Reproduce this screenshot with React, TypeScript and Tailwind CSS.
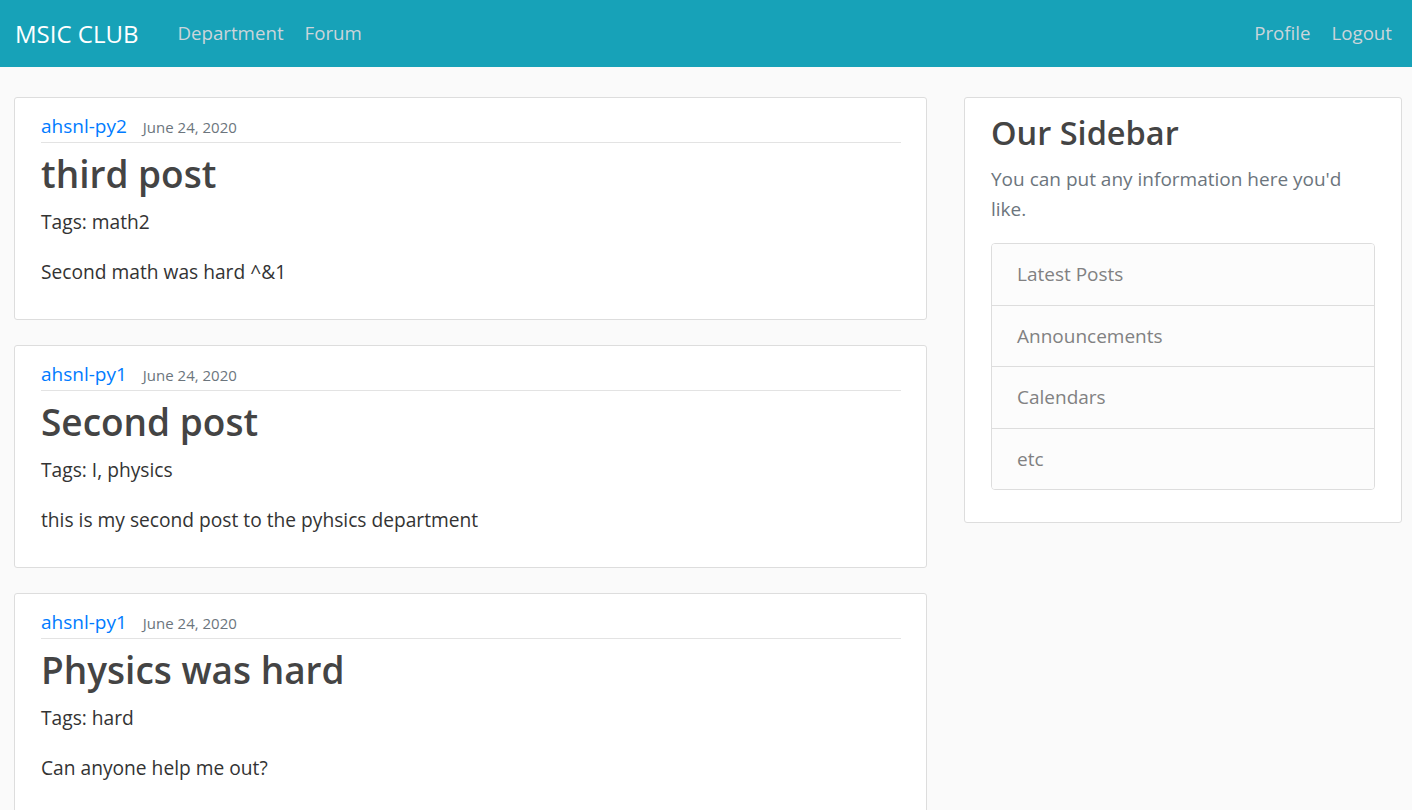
import React from "react";

const posts = [
  { author: "ahsnl-py2", date: "June 24, 2020", title: "third post", tags: "math2", content: "Second math was hard ^&1" },
  { author: "ahsnl-py1", date: "June 24, 2020", title: "Second post", tags: "I, physics", content: "this is my second post to the pyhsics department" },
  { author: "ahsnl-py1", date: "June 24, 2020", title: "Physics was hard", tags: "hard", content: "Can anyone help me out?" },
];

const sideLinks = ["Latest Posts", "Announcements", "Calendars", "etc"];

export default function App() {
  return (
    <div className="min-h-[810px] bg-[#fafafa] text-[#333333] font-['Open_Sans',sans-serif]">
      {/* Navbar */}
      <header className="flex h-[67px] items-center bg-[#17a2b8] pl-[15px] pr-[20px]">
        <a className="text-[24px] text-white">MSIC CLUB</a>
        <nav className="ml-[39px] flex gap-[21px] text-[18.7px] text-[#cbd5db]">
          <a>Department</a>
          <a>Forum</a>
        </nav>
        <nav className="ml-auto flex gap-[21px] text-[18.7px] text-[#cbd5db]">
          <a>Profile</a>
          <a>Logout</a>
        </nav>
      </header>

      <main className="flex gap-[37px] pl-[14px] pr-[10px] pt-[30px]">
        {/* Posts */}
        <div className="flex w-[913px] flex-col gap-[25px]">
          {posts.map((p, i) => (
            <article key={i} className="rounded-[3px] border border-[#dddddd] bg-white pl-[26px] pr-[25px] pb-[13px] pt-[12px]">
              <div className="mb-[5px] flex items-baseline border-b border-[#e3e3e3] pb-px leading-[30px]">
                <a className="mr-[16px] translate-y-px text-[19px] text-[#007bff]">{p.author}</a>
                <small className="translate-y-px text-[15px] text-[#6c757d]">{p.date}</small>
              </div>
              <h2 className="mb-[10px] translate-y-[2px] text-[37px] font-semibold leading-[48px] text-[#444444]">{p.title}</h2>
              <p className="mb-[20px] translate-y-px text-[19.2px] leading-[30px]">Tags: {p.tags}</p>
              <p className="mb-[20px] translate-y-px text-[19.2px] leading-[30px]">{p.content}</p>
            </article>
          ))}
        </div>

        {/* Sidebar */}
        <aside className="w-[438px] self-start rounded-[3px] border border-[#dddddd] bg-white px-[26px] pb-[12px] pt-[13px]">
          <h3 className="mb-[10px] translate-y-px text-[32.5px] font-semibold leading-[42px] text-[#444444]">Our Sidebar</h3>
          <p className="mb-[20px] translate-y-px text-[19px] leading-[30px] text-[#6c757d]">
            You can put any information here you'd like.
          </p>
          <ul className="mb-[20px] overflow-hidden rounded-[4px] border border-[#dddddd]">
            {sideLinks.map((s, i) => (
              <li
                key={s}
                className={`bg-[#fcfcfc] px-[25px] py-[15px] text-[19px] leading-[30.5px] text-[#818182] ${i > 0 ? "border-t border-[#dddddd]" : ""}`}
              >
                {s}
              </li>
            ))}
          </ul>
        </aside>
      </main>
    </div>
  );
}
